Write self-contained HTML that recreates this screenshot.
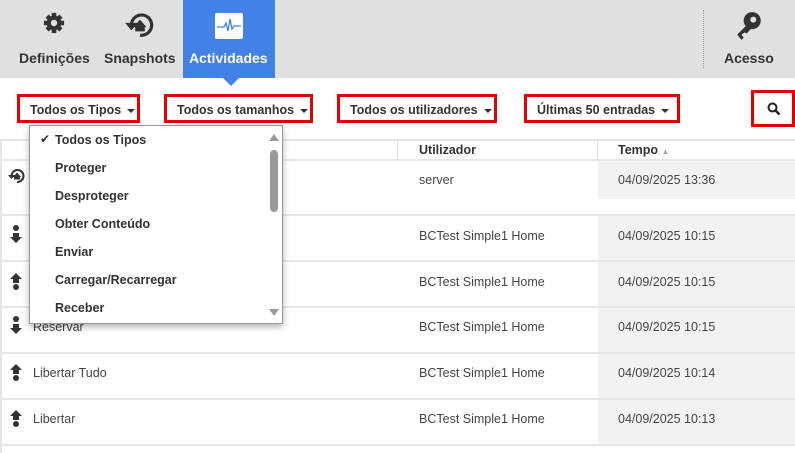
<!DOCTYPE html>
<html><head><meta charset="utf-8"><style>
*{margin:0;padding:0;box-sizing:border-box}
body{width:795px;height:453px;overflow:hidden;background:#fff;font-family:"Liberation Sans","DejaVu Sans",sans-serif;color:#333;position:relative}
.a{position:absolute}
.hdr{left:0;top:0;width:795px;height:78px;background:#e0e0e0}
.tab{font-weight:bold;font-size:14px;color:#333;text-align:center}
.sel{border:3px solid #e00000;height:29px;top:94px;font-weight:bold;font-size:12.5px;color:#333;padding:6px 0 0 10px;white-space:nowrap}
.car{display:inline-block;border-left:4px solid transparent;border-right:4px solid transparent;border-top:4px solid #333;vertical-align:middle;margin-left:6px}
.hl{left:0;width:795px;height:2px;background:#e6e6e6}
.cell{font-size:12.5px;color:#444}
.gray{left:598px;width:197px;background:#f2f2f2}
.dd{left:29px;top:125px;width:254px;height:199px;background:#fff;border:1px solid #999;box-shadow:0 3px 6px rgba(0,0,0,.3)}
.dd div{position:absolute;left:25px;font-weight:bold;font-size:12.5px;color:#333}
</style></head><body>
<div class="a hdr"></div>
<div class="a" style="left:183px;top:0;width:92px;height:78px;background:#4182e4"></div>
<div class="a" style="left:223px;top:78px;border-left:8px solid transparent;border-right:8px solid transparent;border-top:8px solid #4182e4"></div>
<div class="a" style="left:703px;top:10px;width:0;height:58px;border-left:1px dotted #999"></div>
<!-- icons -->
<svg class="a" style="left:43px;top:12px" width="22" height="22" viewBox="0 0 24 24"><g fill="#333"><circle cx="12" cy="12" r="8"/><g stroke="#333" stroke-width="5"><line x1="12" y1="1" x2="12" y2="23"/><line x1="1" y1="12" x2="23" y2="12"/><line x1="4.5" y1="4.5" x2="19.5" y2="19.5"/><line x1="19.5" y1="4.5" x2="4.5" y2="19.5"/></g></g><circle cx="12" cy="12" r="3.5" fill="#e0e0e0"/></svg>
<svg class="a" style="left:124px;top:9px" width="32" height="32" viewBox="0 0 30 30"><path d="M7 14 A9.5 9.5 0 1 1 15 24.5" fill="none" stroke="#333" stroke-width="3"/><path d="M1 13 L7 20 L13 13Z" fill="#333"/><path d="M9 17 L15 10 L21 17 L19.5 17 L19.5 21 L10.5 21 L10.5 17Z" fill="#333"/></svg>
<svg class="a" style="left:215px;top:13px" width="28" height="26" viewBox="0 0 28 26"><rect width="28" height="26" rx="2" fill="#fff"/><path d="M2 14 H9 L11 10 L13 18 L15 6 L17 16 L19 13 H26" fill="none" stroke="#4182e4" stroke-width="1.3"/></svg>
<svg class="a" style="left:735px;top:11px" width="28" height="30" viewBox="0 0 26 28"><circle cx="16" cy="9" r="8" fill="#333"/><circle cx="17" cy="8" r="2.8" fill="#e0e0e0"/><path d="M12 12 L2 22 L6 27 L8 25 L6 22 L9 20 L11 21 L16 15Z" fill="#333"/></svg>
<div class="a tab" style="left:19px;top:50px">Definições</div>
<div class="a tab" style="left:104px;top:50px">Snapshots</div>
<div class="a tab" style="left:189px;top:50px;color:#fff">Actividades</div>
<div class="a tab" style="left:724px;top:50px">Acesso</div>
<!-- filters -->
<div class="a sel" style="left:17px;width:123px">Todos os Tipos<span class="car"></span></div>
<div class="a sel" style="left:164px;width:149px">Todos os tamanhos<span class="car"></span></div>
<div class="a sel" style="left:337px;width:160px">Todos os utilizadores<span class="car"></span></div>
<div class="a sel" style="left:524px;width:156px">Últimas 50 entradas<span class="car"></span></div>
<div class="a" style="left:751px;top:90px;width:44px;height:37px;border:3px solid #e00000"></div>
<svg class="a" style="left:767px;top:102px" width="14" height="14" viewBox="0 0 14 14"><circle cx="5.5" cy="5.5" r="4" fill="none" stroke="#222" stroke-width="2"/><line x1="8.5" y1="8.5" x2="12.5" y2="12.5" stroke="#222" stroke-width="2.5"/></svg>
<!-- table -->
<div class="a" style="left:0;top:139px;width:2px;height:314px;background:#e6e6e6"></div>
<div class="a gray" style="top:161px;height:38px"></div>
<div class="a gray" style="top:216px;height:44px"></div>
<div class="a gray" style="top:262px;height:44px"></div>
<div class="a gray" style="top:308px;height:44px"></div>
<div class="a gray" style="top:354px;height:44px"></div>
<div class="a gray" style="top:400px;height:44px"></div>
<div class="a hl" style="top:139px"></div>
<div class="a hl" style="top:159px"></div>
<div class="a" style="left:397px;top:139px;width:1px;height:21px;background:#ddd"></div>
<div class="a" style="left:597px;top:139px;width:1px;height:21px;background:#ddd"></div>
<div class="a" style="left:419px;top:143px;font-weight:bold;font-size:12.5px">Utilizador</div>
<div class="a" style="left:618px;top:143px;font-weight:bold;font-size:12.5px">Tempo <span style="font-size:8px;color:#aaa">▲</span></div>
<div class="a hl" style="top:214px"></div>
<div class="a hl" style="top:260px"></div>
<div class="a hl" style="top:306px"></div>
<div class="a hl" style="top:352px"></div>
<div class="a hl" style="top:398px"></div>
<div class="a hl" style="top:444px"></div>
<div class="a cell" style="left:419px;top:173px">server</div>
<div class="a cell" style="left:618px;top:173px">04/09/2025 13:36</div>
<div class="a cell" style="left:419px;top:229px">BCTest Simple1 Home</div><div class="a cell" style="left:618px;top:229px">04/09/2025 10:15</div>
<div class="a cell" style="left:419px;top:275px">BCTest Simple1 Home</div><div class="a cell" style="left:618px;top:275px">04/09/2025 10:15</div>
<div class="a cell" style="left:419px;top:320px">BCTest Simple1 Home</div><div class="a cell" style="left:618px;top:320px">04/09/2025 10:15</div>
<div class="a cell" style="left:419px;top:366px">BCTest Simple1 Home</div><div class="a cell" style="left:618px;top:366px">04/09/2025 10:14</div>
<div class="a cell" style="left:419px;top:412px">BCTest Simple1 Home</div><div class="a cell" style="left:618px;top:412px">04/09/2025 10:13</div>
<div class="a cell" style="left:33px;top:320px">Reservar</div>
<div class="a cell" style="left:33px;top:366px">Libertar Tudo</div>
<div class="a cell" style="left:33px;top:412px">Libertar</div>
<svg class="a" style="left:7px;top:166px" width="20" height="20" viewBox="0 0 20 20"><path d="M4.5 10 A6 6 0 1 1 10 16" fill="none" stroke="#333" stroke-width="2"/><path d="M1 9 L4.5 13 L8 9Z" fill="#333"/><path d="M6 11 L10 6.5 L14 11 L13 11 L13 13.5 L7 13.5 L7 11Z" fill="#333"/></svg>
<svg class="a" style="left:9px;top:225px" width="14" height="20" viewBox="0 0 14 20"><circle cx="7" cy="3" r="3" fill="#333"/><path d="M4 8 H10 V12 H13 L7 18 L1 12 H4Z" fill="#333"/></svg>
<svg class="a" style="left:9px;top:271px" width="14" height="20" viewBox="0 0 14 20"><circle cx="7" cy="16" r="3" fill="#333"/><path d="M4 12 H10 V8 H13 L7 2 L1 8 H4Z" fill="#333"/></svg>
<svg class="a" style="left:9px;top:316px" width="14" height="20" viewBox="0 0 14 20"><circle cx="7" cy="3" r="3" fill="#333"/><path d="M4 8 H10 V12 H13 L7 18 L1 12 H4Z" fill="#333"/></svg>
<svg class="a" style="left:9px;top:362px" width="14" height="20" viewBox="0 0 14 20"><circle cx="7" cy="16" r="3" fill="#333"/><path d="M4 12 H10 V8 H13 L7 2 L1 8 H4Z" fill="#333"/></svg>
<svg class="a" style="left:9px;top:408px" width="14" height="20" viewBox="0 0 14 20"><circle cx="7" cy="16" r="3" fill="#333"/><path d="M4 12 H10 V8 H13 L7 2 L1 8 H4Z" fill="#333"/></svg>
<!-- dropdown -->
<div class="a dd">
<span style="position:absolute;left:10px;top:6px;font-size:12px;font-weight:bold">✔</span>
<div style="top:7px">Todos os Tipos</div>
<div style="top:35px">Proteger</div>
<div style="top:63px">Desproteger</div>
<div style="top:91px">Obter Conteúdo</div>
<div style="top:119px">Enviar</div>
<div style="top:147px">Carregar/Recarregar</div>
<div style="top:175px">Receber</div>
<span style="position:absolute;left:239px;top:8px;border-left:5px solid transparent;border-right:5px solid transparent;border-bottom:7px solid #999"></span>
<span style="position:absolute;left:240px;top:24px;width:8px;height:62px;border-radius:4px;background:#999"></span>
<span style="position:absolute;left:239px;top:183px;border-left:5px solid transparent;border-right:5px solid transparent;border-top:7px solid #999"></span>
</div>
</body></html>
